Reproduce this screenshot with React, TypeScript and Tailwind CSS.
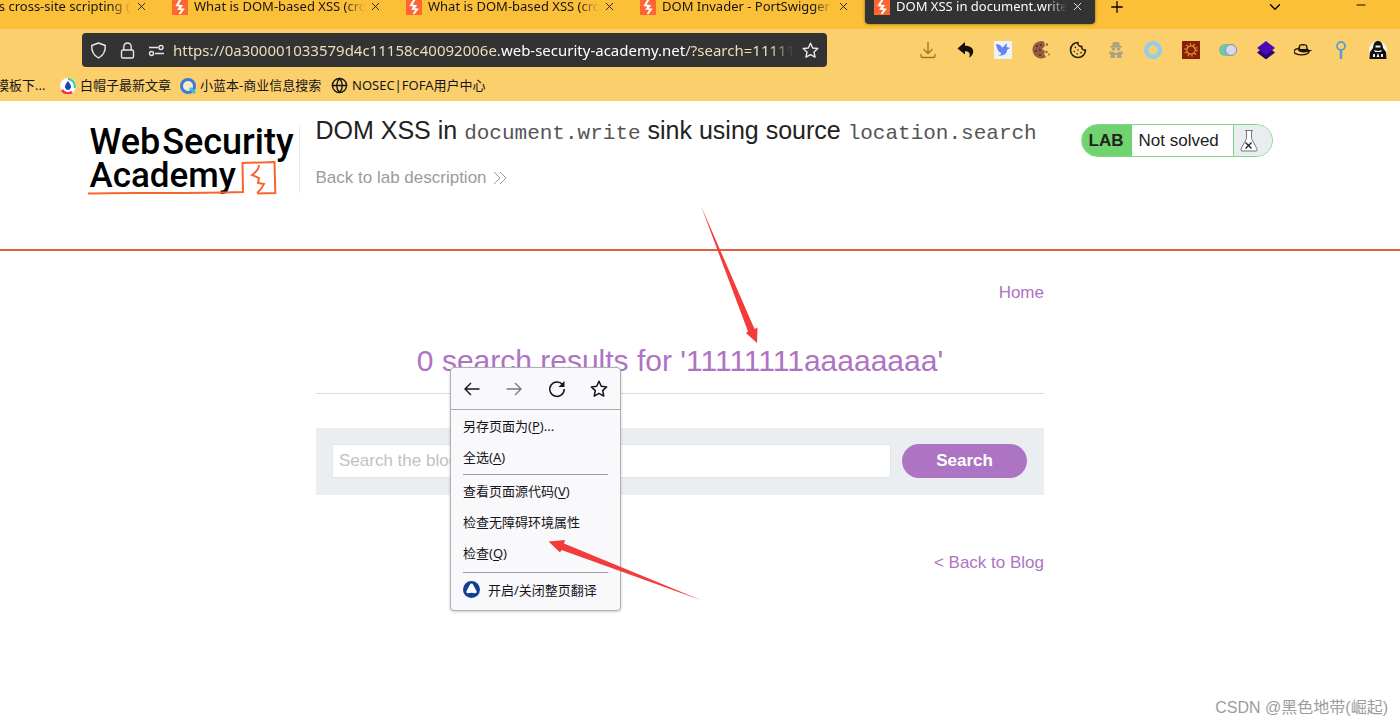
import type { ReactNode } from "react";
import { Cookie, Globe, Plus, X, ChevronDown, Minus } from "lucide-react";

interface ITab {
    title: string;
    active?: boolean;
}

const tabs: ITab[] = [
    { title: "What is cross-site scripting (XSS)" },
    { title: "What is DOM-based XSS (cross-site)" },
    { title: "What is DOM-based XSS (cross-site)" },
    { title: "DOM Invader - PortSwigger" },
    { title: "DOM XSS in document.write sink", active: true },
];

const uiFont = "font-['Noto_Sans','Noto_Sans_CJK_SC',sans-serif]";

const BoltIcon = () => (
    <svg className="size-4 shrink-0" viewBox="0 0 16 16">
        <rect width="16" height="16" fill="#ff6633" />
        <path d="M8.800 0 5 6.200l4.300.8L7 9.800l4 .7L7.500 15" fill="none" stroke="#fff" strokeWidth="2" />
    </svg>
);

const StarIcon = ({ className }: { className: string }) => (
    <svg className={className} viewBox="0 0 18 18" fill="none" stroke="currentColor" strokeWidth="1.5" strokeLinejoin="round">
        <path d="m9 1.3 2.3 5 5.4.6-4 3.7 1.1 5.5L9 13.4l-4.8 2.7 1.1-5.5-4-3.7 5.4-.6z" />
    </svg>
);

const TabBar = () => (
    <div className="flex h-[29px] items-start overflow-hidden bg-[#fbc037] pr-8">
        <div className="-ml-[71px] -mt-3 flex shrink-0 gap-1">
            {tabs.map((tab, index) => (
                <div
                    key={index}
                    className={`flex h-9 w-[230px] shrink-0 items-center rounded-b pl-[9px] pr-2 pt-[1px] ${tab.active ? "bg-[#333333] text-[#fbfbfe] shadow-[0_0_3px_rgba(0,0,0,0.5)]" : "text-[#15141a]"}`}
                >
                    <BoltIcon />
                    <span className="ml-1.5 flex-1 overflow-hidden whitespace-nowrap text-[13px] [mask-image:linear-gradient(to_left,transparent,black_20px)]">
                        {tab.title}
                    </span>
                    <button aria-label="Close tab" className="flex w-5 justify-center">
                        <X size={13} strokeWidth={1.6} />
                    </button>
                </div>
            ))}
        </div>
        <button aria-label="New tab" className="-mt-0.5 ml-[13px]">
            <Plus size={18} strokeWidth={1.7} />
        </button>
        <button aria-label="List all tabs" className="-mt-0.5 ml-auto">
            <ChevronDown size={18} strokeWidth={1.8} />
        </button>
        <button aria-label="Minimize" className="-mt-0.5 ml-[70px]">
            <Minus size={14} strokeWidth={1.6} />
        </button>
    </div>
);

const extensions: { name: string; icon: ReactNode }[] = [
    { name: "Downloads", icon: <path d="M9 1v11M4.500 8 9 12.400 13.500 8M2 13v2q0 1.500 1.500 1.500h11q1.500 0 1.500-1.500v-2" fill="none" stroke="#a77718" strokeWidth="1.400" /> },
    { name: "Undo", icon: <path d="M8 1 .5 7.500 8 13.500v-3.200c4-.3 5.500 1.700 4.300 6.500 6.200-4.500 5.200-12-4.300-12z" fill="#111" /> },
    {
        name: "Bird",
        icon: <><rect width="18" height="18" rx="1" fill="#eef3fb" /><path d="M2 3c3 .2 5 1.500 6.500 3.500L13 2l-.5 4 3.500 1-3 2c0 4-3.500 6-9 5.500 2-.5 3-1.200 3.500-2C4.500 11 2.500 7 2 3z" fill="#6784ee" /></>,
    },
    {
        name: "Cookie manager",
        icon: <><path d="M12 .5A8.700 8.700 0 1 0 14 16l-2-3 1-3-3-2 3-3z" fill="#9c5941" /><g fill="#4f2b22"><circle cx="5" cy="5" r="1" /><circle cx="9" cy="4" r=".9" /><circle cx="4" cy="10" r="1" /><circle cx="8" cy="9" r=".9" /><circle cx="8" cy="14" r="1" /></g><g fill="#9c5941"><circle cx="15" cy="3.500" r="1.200" /><circle cx="14.500" cy="11" r="1.200" /><circle cx="17" cy="13.500" r=".9" /></g></>,
    },
    { name: "Cookie editor", icon: <Cookie size={18} strokeWidth={2.2} color="#29220f" /> },
    {
        name: "Incognito",
        icon: <g fill="#aca184"><path d="M6 1h6l1 4h2v1.500H3V5h2z" /><circle cx="6.500" cy="8" r="1.800" /><circle cx="11.500" cy="8" r="1.800" /><path d="m3 10 6 2 6-2 1 3-2 1 1 3H10v-3H8v3H3l1-3-2-1z" /></g>,
    },
    { name: "Ring", icon: <circle cx="9" cy="9" r="6.800" fill="none" stroke="#96cbe9" strokeWidth="4.500" /> },
    {
        name: "Gear",
        icon: <><rect width="18" height="18" fill="#86210c" /><circle cx="9" cy="9" r="5.800" fill="none" stroke="#e29a2d" strokeWidth="2" strokeDasharray="1.200 2.440" /><circle cx="9" cy="9" r="4.200" fill="none" stroke="#e29a2d" strokeWidth="1.200" /></>,
    },
    { name: "Toggle", icon: <><rect y="3" width="18" height="12" rx="6" fill="#70c6a6" /><circle cx="12" cy="9" r="5.500" fill="#d5d9eb" stroke="#8995a5" /></> },
    { name: "Layers", icon: <><path d="m9 4.500 9 7-9 7-9-7z" fill="#2b0472" /><path d="m9 0 9 7-9 7-9-7z" fill="#4a0bb4" /></> },
    {
        name: "Hat",
        icon: <><ellipse cx="7.500" cy="10.500" rx="7.500" ry="3.300" fill="none" stroke="#17130b" strokeWidth="1.300" /><path d="M5 4q4-2 8 0l1 5q3 0 5-.5-3 3-10 3-4-.5-5-2z" fill="#17130b" /><path d="M6.300 4.500h5.700l.3 3.500H6z" fill="#f1c665" /></>,
    },
    { name: "Pin", icon: <><circle cx="9" cy="5" r="4" fill="none" stroke="#5b9fd2" strokeWidth="1.800" /><path d="M9 9v9" stroke="#5b9fd2" strokeWidth="2.500" /></> },
    {
        name: "Hacker",
        icon: <><circle cx="9" cy="9" r="9" fill="#f5f3ee" /><path d="M9 0c3 0 4.500 2.500 5 7l3 4 .5 7H.500L1 11l3-4C4.500 2.500 6 0 9 0z" fill="#101010" /><path d="M6.500 4.500h5v2h-5zM5 9l4 1 4-1-1 2H6zM4 13h2v3H4zm8 0h2v3h-2zm-3-1 1.500 4h-3z" fill="#eee" /></>,
    },
];

const Toolbar = () => (
    <div className="flex items-center bg-[#fbd06c] pb-[1px] pl-[82px] pr-[13px] pt-1">
        <div className="flex h-[34px] min-w-0 flex-1 items-center rounded bg-[#333333] pl-2 pr-2 text-[#e8e8e8]">
            <svg className="size-[17px] shrink-0" viewBox="0 0 17 17" fill="none" stroke="currentColor" strokeWidth="1.400" strokeLinejoin="round">
                <path d="m8.500 1 6.800 2.500c.2 5.500-1.500 9.800-6.800 12.500C3.200 13.300 1.500 9 1.700 3.500z" />
            </svg>
            <svg className="ml-3 size-[17px] shrink-0" viewBox="0 0 17 17" fill="none" stroke="currentColor" strokeWidth="1.400">
                <rect x="2.500" y="8" width="12" height="8" rx="1.500" />
                <path d="M4.800 8V4.700a3.700 3.700 0 0 1 7.400 0V8" />
            </svg>
            <svg className="ml-3 size-[17px] shrink-0" viewBox="0 0 17 17" fill="none" stroke="currentColor" strokeWidth="1.400">
                <path d="M1 5.500h9M7 11.500h9" />
                <circle cx="13" cy="5.500" r="2" />
                <circle cx="3.500" cy="11.500" r="2" />
            </svg>
            <div className="ml-2 flex-1 overflow-hidden whitespace-nowrap text-[15px] text-[#e9dfb9] [mask-image:linear-gradient(to_left,transparent,black_24px)]">
                https://0a300001033579d4c11158c40092006e.<span className="text-white">web-security-academy.net</span>/?search=11111111aaaaaaaa
            </div>
            <button aria-label="Bookmark this page" className="ml-2">
                <StarIcon className="size-[17px]" />
            </button>
        </div>
        <div className="ml-[92px] flex w-[468px] shrink-0 justify-between">
            {extensions.map((item) => (
                <button key={item.name} aria-label={item.name}>
                    <svg className="size-[18px]" viewBox="0 0 18 18">{item.icon}</svg>
                </button>
            ))}
        </div>
    </div>
);

const Bookmarks = () => (
    <div className="flex h-[33px] items-center overflow-hidden whitespace-nowrap bg-[#fbd06c] pt-0.5 text-[13px] text-[#15141a]">
        <a href="#" className="-ml-1 w-16">模板下...</a>
        <a href="#" className="flex w-[120px] items-center gap-1">
            <svg className="size-4" viewBox="0 0 16 16">
                <circle cx="8" cy="8" r="8" fill="#fff" />
                <path d="M8 1a7 7 0 0 1 6.500 9" fill="none" stroke="#38c7a1" strokeWidth="2" />
                <path d="M2 12a7 7 0 0 0 10 2" fill="none" stroke="#ef2f55" strokeWidth="2.500" />
                <path d="M8 3q3.500 4 3 6.500-1 2.500-3 2.500t-3-2.500Q4.500 7 8 3z" fill="#1746c4" />
            </svg>
            白帽子最新文章
        </a>
        <a href="#" className="flex w-[151px] items-center gap-1">
            <svg className="size-4" viewBox="0 0 16 16">
                <circle cx="8" cy="8" r="6.500" fill="#fbe9c0" stroke="#3b78e0" strokeWidth="3" />
                <path d="m10 10 5 5" stroke="#2ec5e6" strokeWidth="3" />
            </svg>
            小蓝本-商业信息搜索
        </a>
        <a href="#" className="flex items-center gap-1">
            <Globe size={17} strokeWidth={2} />
            NOSEC|FOFA用户中心
        </a>
    </div>
);

const Logo = () => (
    <a href="#" aria-label="Web Security Academy" className="relative block w-[212px] shrink-0 border-r border-[#e8e8e8] pl-0.5 font-[Roboto,sans-serif] text-[35px] font-medium leading-[34px] text-black">
        <span className="flex gap-0.5 text-[36px]"><span>Web</span><span>Security</span></span>
        <span className="block">Academy</span>
        <svg className="absolute left-0 top-0 h-[74px] w-[206px]" viewBox="0 0 206 74" fill="none" stroke="#f9642f" strokeWidth="2">
            <path d="M0 68.500c40-1.500 80 .5 155-1.500l-.5-29 32-1 .8 31-18 .5" />
            <path d="M171 40q0 5-7 10l7 3-1 5 6 1q-2 5-7 9" />
        </svg>
    </a>
);

const LabHeader = () => (
    <header className="border-b-2 border-[#e0623a]">
        <div className="flex w-full max-w-[1360px] justify-center">
            <div className="flex h-[148px] w-full max-w-[1185px] items-start">
                <div className="pt-6"><Logo /></div>
                <div className="flex-1 pl-4 pt-[13px]">
                    <h2 className="whitespace-nowrap text-[25px] leading-8 text-[#222222]">
                        DOM XSS in <code className="font-['Liberation_Mono',monospace] text-[21px] text-[#555555]">document.write</code> sink using source{" "}
                        <code className="font-['Liberation_Mono',monospace] text-[21px] text-[#555555]">location.search</code>
                    </h2>
                    <a href="#" className="mt-4 flex items-center gap-1.5 text-[17px] leading-6 text-[#9b9b9b]">
                        Back to lab description
                        <svg className="h-3.5 w-3.5" viewBox="0 0 14 14" fill="none" stroke="currentColor">
                            <path d="m1 1 6 6-6 6M7 1l6 6-6 6" />
                        </svg>
                    </a>
                </div>
                <div className="mt-[23px] flex h-[33px] w-48 overflow-hidden rounded-full border border-[#7fd67f] text-[17px] leading-8 text-[#222222]">
                    <p className="w-[50px] bg-[#6fd36f] pl-[7px] font-bold">LAB</p>
                    <p className="flex-1 pl-[7px]">Not solved</p>
                    <div className="flex w-[39px] items-center border-l border-[#7fd67f] bg-[#e9edf0] pl-1.5">
                        <svg className="h-[22px] w-[18px]" viewBox="0 0 18 22" fill="#fff" stroke="#777" strokeWidth="1">
                            <path d="M5 .5h8M6.500.5v8L1 19q-.5 2 1 2h14q1.500 0 1-2L11.500 8.500v-8" />
                            <path d="m5.500 12.500 6 6m0-6-6 6" stroke="#222" strokeWidth="1.400" />
                        </svg>
                    </div>
                </div>
            </div>
        </div>
    </header>
);

const Blog = () => (
    <main className="flex w-full max-w-[1360px] justify-center text-[17px] text-[#ad74c3]">
        <div className="w-full max-w-[728px] pt-[30px]">
            <nav className="text-right leading-6"><a href="#">Home</a></nav>
            <h1 className="mt-9 border-b border-[#d8dbde] pb-3 text-center text-[30px] leading-10">
                0 search results for '11111111aaaaaaaa'
            </h1>
            <form className="mt-[34px] flex gap-[11px] bg-[#ebeef1] p-4 pr-[17px] pb-[17px]" onSubmit={(e) => e.preventDefault()}>
                <input
                    type="text"
                    aria-label="Search the blog"
                    placeholder="Search the blog..."
                    className="h-[34px] min-w-0 flex-1 border border-[#e3e6e9] bg-white px-1.5 placeholder:text-[#c2c2c2]"
                />
                <button type="submit" className="h-[34px] w-[125px] rounded-full bg-[#ad74c3] font-bold text-white">Search</button>
            </form>
            <div className="mt-14 text-right leading-6"><a href="#">&lt; Back to Blog</a></div>
        </div>
    </main>
);

const MenuItem = ({ text, accessKey, tail = "" }: { text: string; accessKey?: string; tail?: string }) => (
    <button className="block h-[31px] w-full px-3 text-left">
        {text}
        {accessKey && <>(<u className="underline-offset-2">{accessKey}</u>){tail}</>}
    </button>
);

const ContextMenu = () => (
    <div className={`absolute left-[450px] top-[367px] w-[171px] rounded border border-[#b0b0b4] bg-[#f9f9fb] pb-1 text-[13px] leading-5 text-[#15141a] shadow-[0_1px_3px_rgba(0,0,0,0.2)] ${uiFont}`}>
        <div className="flex h-[42px] items-center justify-between border-b border-[#aaaaae] px-3">
            <button aria-label="Back">
                <svg className="size-[18px]" viewBox="0 0 18 18" fill="none" stroke="#15141a" strokeWidth="1.400"><path d="M16.500 9H2m6-6L2 9l6 6" /></svg>
            </button>
            <button aria-label="Forward" disabled>
                <svg className="size-[18px]" viewBox="0 0 18 18" fill="none" stroke="#7b7b80" strokeWidth="1.400"><path d="M1.500 9H16m-6-6 6 6-6 6" /></svg>
            </button>
            <button aria-label="Reload">
                <svg className="size-[18px]" viewBox="0 0 18 18" fill="none" stroke="#15141a" strokeWidth="1.500">
                    <path d="M14.500 4.500A7.200 7.200 0 1 0 16.200 9" />
                    <path d="M16.500 1v6h-6z" fill="#15141a" stroke="none" />
                </svg>
            </button>
            <button aria-label="Bookmark"><StarIcon className="size-[18px]" /></button>
        </div>
        <div className="pb-0.5">
            <MenuItem text="另存页面为" accessKey="P" tail="..." />
            <MenuItem text="全选" accessKey="A" />
        </div>
        <hr className="mx-3 border-[#9d9da1]" />
        <div className="pb-1">
            <MenuItem text="查看页面源代码" accessKey="V" />
            <MenuItem text="检查无障碍环境属性" />
            <MenuItem text="检查" accessKey="Q" />
        </div>
        <hr className="mx-3 border-[#9d9da1]" />
        <button className="flex h-[33px] w-full items-center gap-2 px-3">
            <svg className="size-[17px]" viewBox="0 0 17 17">
                <circle cx="8.500" cy="8.500" r="8.500" fill="#123f94" />
                <path d="M8.500 2.500q1 0 1.500 1l3.500 6.500q.8 2-1.200 2.200-3.800-1-7.600 0-2-.2-1.200-2.200L7 3.500q.5-1 1.500-1z" fill="#fff" />
            </svg>
            开启/关闭整页翻译
        </button>
    </div>
);

const Arrows = () => (
    <svg className="pointer-events-none absolute left-[540px] top-[200px] h-[410px] w-[230px]" viewBox="540 200 230 410" fill="#f43b3b">
        <path d="M701 206 754.500 329l3-1.500-.5 15.500-11-10 2-1.500z" />
        <path d="M702 600.500 564 543.500l1-3.500-16.500 1.500 11.500 11 1.500-2.500z" />
    </svg>
);

const App: React.FC = () => {
    return <div className="relative min-h-screen overflow-hidden bg-white font-['Liberation_Sans','Noto_Sans_CJK_SC',sans-serif]">
        <div className={uiFont}>
            <TabBar />
            <Toolbar />
            <Bookmarks />
        </div>
        <LabHeader />
        <Blog />
        <ContextMenu />
        <Arrows />
        <p className="absolute bottom-1 right-3 text-[16px] leading-6 text-[#9c9c9c]">CSDN @黑色地带(崛起)</p>
    </div>
};
export default App;
